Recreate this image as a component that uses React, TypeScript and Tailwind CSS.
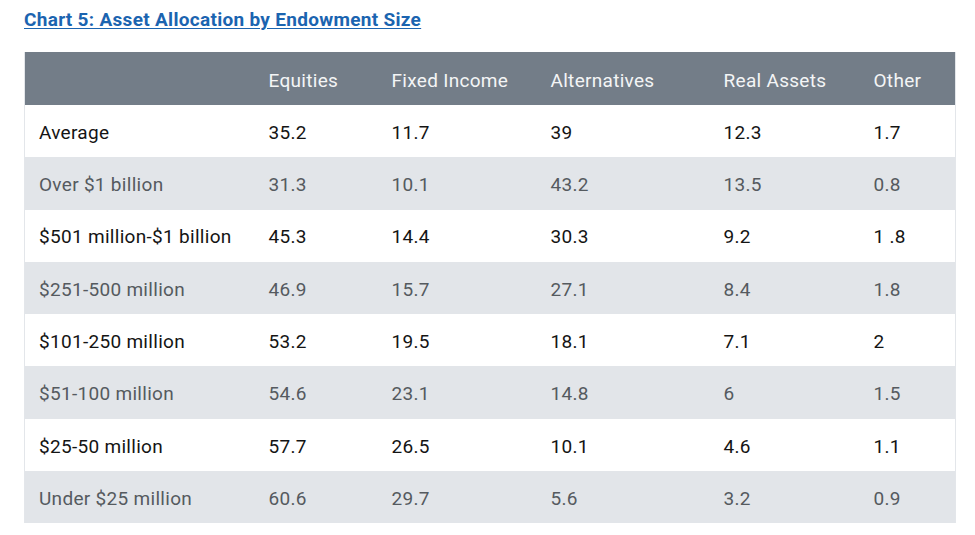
const COLUMNS = ["", "Equities", "Fixed Income", "Alternatives", "Real Assets", "Other"];

const ROWS = [
  ["Average", "35.2", "11.7", "39", "12.3", "1.7"],
  ["Over $1 billion", "31.3", "10.1", "43.2", "13.5", "0.8"],
  ["$501 million-$1 billion", "45.3", "14.4", "30.3", "9.2", "1 .8"],
  ["$251-500 million", "46.9", "15.7", "27.1", "8.4", "1.8"],
  ["$101-250 million", "53.2", "19.5", "18.1", "7.1", "2"],
  ["$51-100 million", "54.6", "23.1", "14.8", "6", "1.5"],
  ["$25-50 million", "57.7", "26.5", "10.1", "4.6", "1.1"],
  ["Under $25 million", "60.6", "29.7", "5.6", "3.2", "0.9"],
];

const WIDTHS = ["w-[229px]", "w-[123px]", "w-[159px]", "w-[173px]", "w-[150px]", "w-[97px]"];

export default function App() {
  return (
    <div className="min-h-[535px] bg-white px-6 pt-[8px] font-['Roboto',sans-serif] tracking-[0.3px]">
      <h2 className="text-[19px] font-bold leading-[23px] text-[#1b64b0] underline underline-offset-2">
        Chart 5: Asset Allocation by Endowment Size
      </h2>

      <table className="mt-[21px] w-[931px] table-fixed border-collapse border-x border-[#e3e6ea] text-[19px]">
        <thead>
          <tr className="h-[53px] bg-[#737d88] text-[#f4f5f6]">
            {COLUMNS.map((c, i) => (
              <th key={i} className={`${WIDTHS[i]} pt-[6px] pr-[15px] ${i === 0 ? "pl-[14px]" : "pl-[15px]"} text-left font-normal`}>
                {c}
              </th>
            ))}
          </tr>
        </thead>
        <tbody>
          {ROWS.map((row, r) => (
            <tr
              key={r}
              className={r % 2 === 0 ? "h-[52.3px] bg-white text-[#141414]" : "h-[52.3px] bg-[#e2e5e9] text-[#555a5f]"}
            >
              {row.map((cell, i) => (
                <td key={i} className={`pt-[4px] pr-[15px] ${i === 0 ? "pl-[14px]" : "pl-[15px]"} text-left`}>
                  {cell}
                </td>
              ))}
            </tr>
          ))}
        </tbody>
      </table>
    </div>
  );
}
